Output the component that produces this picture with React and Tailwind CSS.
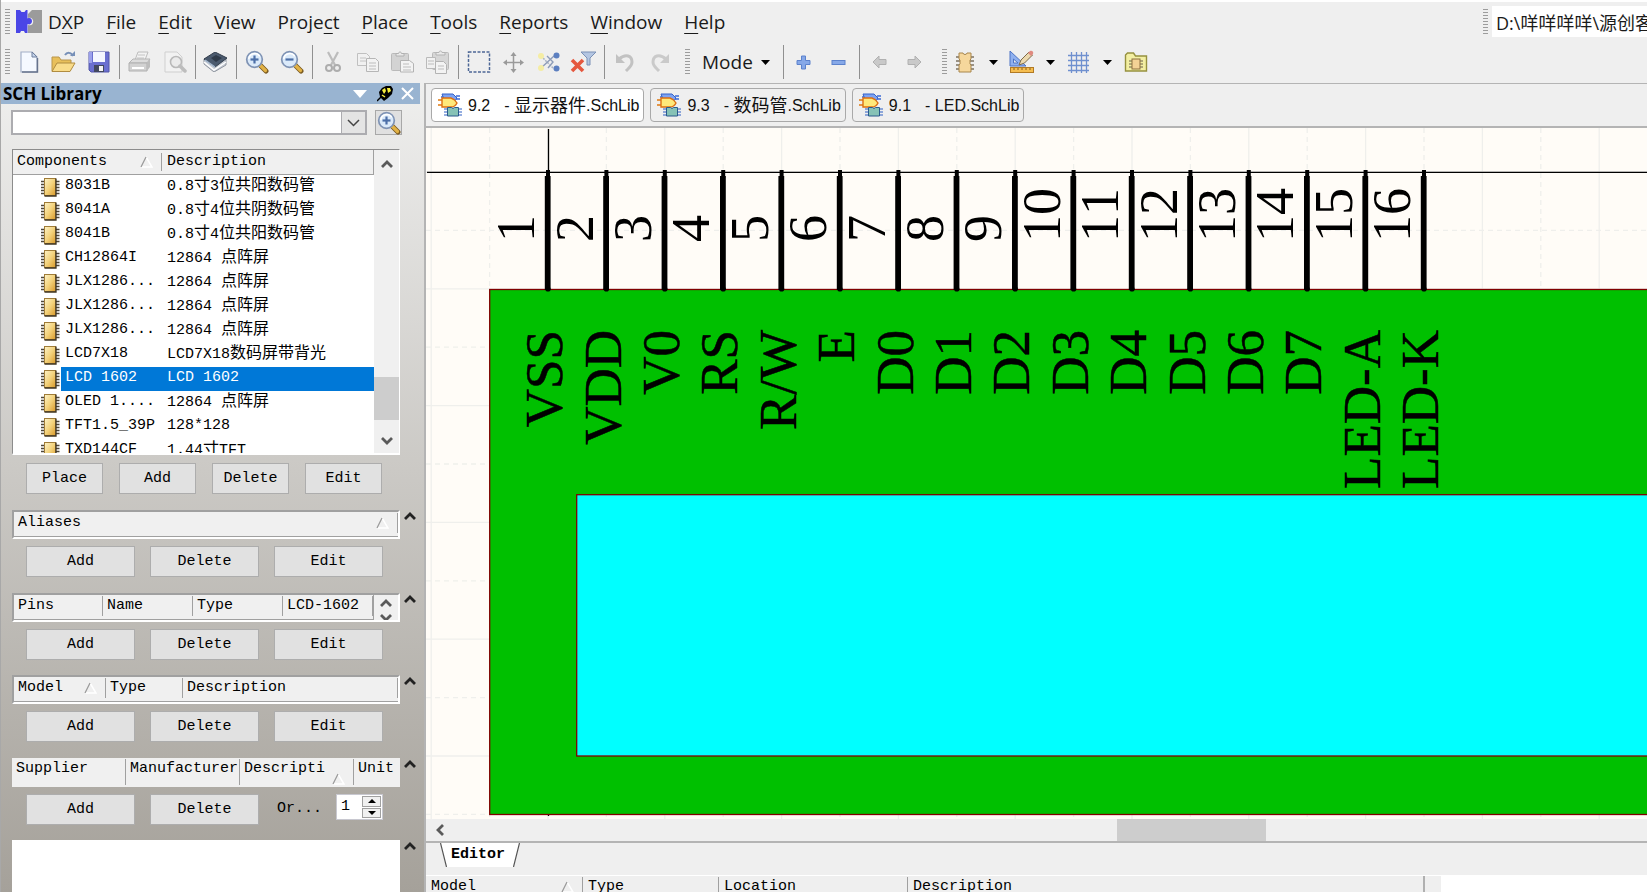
import React from "react";

const UI = "font-['Open_Sans','Noto_Sans_CJK_SC',sans-serif]";
const MONO = "font-['Liberation_Mono','Noto_Sans_CJK_SC',monospace]";

/* ---------- text helpers ---------- */

function Mixed({ text, cjk }) {
  const parts = text.split(/([\u4e00-\u9fff]+)/).filter(Boolean);
  return parts.map((p, i) =>
    /[\u4e00-\u9fff]/.test(p) ? (
      <span key={i} className={cjk}>{p}</span>
    ) : (
      <React.Fragment key={i}>{p}</React.Fragment>
    )
  );
}

/* ---------- small pieces ---------- */

function Grip() {
  return (
    <div className="h-[26px] w-[5px] shrink-0 bg-[repeating-linear-gradient(to_bottom,#9c9c9c_0px,#9c9c9c_1px,#efefef_1px,#efefef_3px)]" />
  );
}

function Sep() {
  return (
    <div className="flex h-[34px] w-[6px] shrink-0 justify-center">
      <div className="w-px bg-[#909090]" />
    </div>
  );
}

function Tool({ label, children }) {
  return (
    <button type="button" aria-label={label} className="flex h-[34px] w-[35px] shrink-0 items-center justify-center">
      {children}
    </button>
  );
}

function Caret({ label }) {
  return (
    <button type="button" aria-label={label} className="flex h-[34px] w-[22px] shrink-0 items-center justify-center">
      <svg width="9" height="5" viewBox="0 0 9 5"><path d="M0 0h9L4.500 5z" fill="#000" /></svg>
    </button>
  );
}

function SortMark() {
  return (
    <svg width="13" height="12" viewBox="0 0 13 12" className="shrink-0" aria-hidden="true">
      <path d="M6 1L12 11H1" fill="none" stroke="#fff" strokeWidth="1.500" />
      <path d="M1 11L6 1" fill="none" stroke="#9a9a9a" strokeWidth="1.300" />
    </svg>
  );
}

function Chevron({ dir = "up", color = "#5a5a5a", size = 12 }) {
  const d = {
    up: "M1 9L6 4L11 9",
    down: "M1 3L6 8L11 3",
    left: "M9 1L4 6L9 11",
  }[dir];
  return (
    <svg width={size} height={size} viewBox="0 0 12 12" aria-hidden="true">
      <path d={d} fill="none" stroke={color} strokeWidth="2.800" />
    </svg>
  );
}

function ChipIcon() {
  return (
    <svg width="19" height="20" viewBox="0 0 19 20" className="shrink-0" aria-hidden="true">
      <defs>
        <linearGradient id="chip" x1="0" y1="0" x2="1" y2="1">
          <stop offset="0" stopColor="#fdf3c8" />
          <stop offset="0.500" stopColor="#f3d27c" />
          <stop offset="1" stopColor="#d99a2b" />
        </linearGradient>
      </defs>
      <path d="M0 4.500h3M0 7.500h3M0 10.500h3M0 13.500h3M0 16.500h3M15 4.500h3.500M15 7.500h3.500M15 10.500h3.500M15 13.500h3.500M15 16.500h3.500" stroke="#4f483c" strokeWidth="1.400" />
      <rect x="3.500" y="1.500" width="11" height="17" fill="url(#chip)" stroke="#a07c38" />
      <path d="M3.500 19h11.500V1.500" fill="none" stroke="#3f3420" strokeWidth="1.300" />
    </svg>
  );
}

function Magnifier({ sign }) {
  return (
    <svg width="24" height="24" viewBox="0 0 24 24" aria-hidden="true">
      <path d="M15 15l6 6" stroke="#7a5a20" strokeWidth="5" strokeLinecap="round" />
      <path d="M15 15l5.500 5.500" stroke="#e2b245" strokeWidth="3.200" strokeLinecap="round" />
      <circle cx="9.500" cy="9.500" r="7.800" fill="#dbeafa" stroke="#7f93b4" strokeWidth="1.700" />
      <path d="M3.800 9a6 6 0 0 1 11-2.600" fill="none" stroke="#fff" strokeWidth="1.500" />
      <path d="M5.500 9.500h8" stroke="#4c6fa8" strokeWidth="2.200" />
      {sign === "+" && <path d="M9.500 5.500v8" stroke="#4c6fa8" strokeWidth="2.200" />}
    </svg>
  );
}

function Logo() {
  return (
    <svg width="26" height="23" viewBox="0 0 26 23" aria-hidden="true">
      <path d="M12 0h14v23H12z" fill="#9b9b9b" />
      <path d="M11 0h5l-4 4v4c7-2.500 7 9.500 0 7v8h-1z" fill="#efefef" />
      <path d="M0 0h4l1.500 2h3L10 0h1.500v8.500c6-2.500 6 8 0 5.500V23H9l-1-2H5l-1 2H0z" fill="#4a46e6" />
    </svg>
  );
}

const icons = {
  newDoc: (
    <svg width="20" height="22" viewBox="0 0 20 22">
      <path d="M2 1h11l5 5v15H2z" fill="#f5f9ff" stroke="#a3b0c8" strokeWidth="1.200" />
      <path d="M13 1v5h5z" fill="#c6d6ee" stroke="#6f7f9c" />
      <path d="M3 21h15.500V7" fill="none" stroke="#66738c" strokeWidth="1.400" />
    </svg>
  ),
  open: (
    <svg width="25" height="22" viewBox="0 0 25 22">
      <path d="M1 20V6h7l2 3h10v4" fill="#e8bf5a" stroke="#b8954a" />
      <path d="M1 20.500L6 12h18l-5 8.500z" fill="#f9dc8a" stroke="#b08c40" />
      <path d="M14 4c2-3 6-3 8 1" fill="none" stroke="#7790b8" strokeWidth="2" />
      <path d="M19 5h5V0z" fill="#7790b8" />
    </svg>
  ),
  save: (
    <svg width="22" height="22" viewBox="0 0 22 22">
      <path d="M1 1h20v20H3l-2-2z" fill="#6a6fd0" stroke="#5257a8" />
      <rect x="5" y="1" width="12" height="10" fill="#f4f6ff" />
      <path d="M1 1h3v11H1z" fill="#9ba0ec" />
      <rect x="6" y="14" width="10" height="7" fill="#42485f" />
      <rect x="11" y="15" width="4" height="5" fill="#f3f3f3" />
    </svg>
  ),
  print: (
    <svg width="23" height="22" viewBox="0 0 23 22">
      <path d="M7 9l3-8h10l-3 8z" fill="#f3f3f3" stroke="#bcbcbc" />
      <path d="M10 4h7M9 7h7" stroke="#c4c4c4" />
      <path d="M1 12l4-4h17l-3 4z" fill="#dcdcdc" stroke="#b5b5b5" />
      <path d="M1 12h18v8H1z" fill="#d2d2d2" stroke="#b0b0b0" />
      <path d="M19 12l3-4v8l-3 4z" fill="#bdbdbd" />
      <path d="M4 17h12" stroke="#fff" strokeWidth="2" />
    </svg>
  ),
  preview: (
    <svg width="24" height="22" viewBox="0 0 24 22">
      <path d="M2 1h12l5 5v15H2z" fill="#f2f2f2" stroke="#cfcfcf" />
      <circle cx="13" cy="11" r="5.500" fill="#ebebeb" stroke="#b9b9b9" strokeWidth="1.600" />
      <path d="M17 15l5 5" stroke="#bdbdbd" strokeWidth="3.500" strokeLinecap="round" />
    </svg>
  ),
  layers: (
    <svg width="25" height="20" viewBox="0 0 25 20">
      <path d="M1 7v5l10 8 12-7V7z" fill="#c9ced6" stroke="#8f959f" />
      <path d="M1 10l10 8 12-8" fill="none" stroke="#fff" strokeWidth="1.500" />
      <path d="M1 7l11-7 12 6-12 9z" fill="#4b5a6e" stroke="#333e4c" />
      <path d="M8 6l5-3 6 3-6 4z" fill="#2f3a49" />
      <path d="M2 8l10 7" stroke="#a4b8d0" strokeWidth="1.500" />
    </svg>
  ),
  cut: (
    <svg width="16" height="22" viewBox="0 0 16 22">
      <path d="M3 1l7 13M13 1L6 14" stroke="#bcbcbc" strokeWidth="2.200" />
      <circle cx="4" cy="17" r="3" fill="none" stroke="#adadad" strokeWidth="2" />
      <circle cx="12" cy="17" r="3" fill="none" stroke="#adadad" strokeWidth="2" />
    </svg>
  ),
  copy: (
    <svg width="24" height="21" viewBox="0 0 24 21">
      <path d="M1.500 1.500h9l3 3v9h-12z" fill="#f1f1f1" stroke="#c0c0c0" />
      <path d="M4 6h6M4 9h6" stroke="#c4c4c4" />
      <path d="M10.500 6.500h9l3 3v10h-12z" fill="#f3f3f3" stroke="#b6b6b6" />
      <path d="M13 11h7M13 14h7M13 17h7" stroke="#bdbdbd" />
    </svg>
  ),
  paste: (
    <svg width="25" height="22" viewBox="0 0 25 22">
      <rect x="1.500" y="2.500" width="17" height="17" rx="1" fill="#d3d3d3" stroke="#bababa" />
      <path d="M6 5V2.500h2.500c0-2 3-2 3 0H14V5z" fill="#e9e9e9" stroke="#b0b0b0" />
      <path d="M10.500 9.500h9l4 3v8.500h-13z" fill="#f3f3f3" stroke="#b3b3b3" />
      <path d="M13 13h6M13 16h8M13 19h8" stroke="#bdbdbd" />
    </svg>
  ),
  rubber: (
    <svg width="25" height="25" viewBox="0 0 25 25">
      <rect x="7.500" y="2.500" width="16" height="17" rx="1" fill="#d6d6d6" stroke="#bababa" />
      <path d="M11 5V2.500h3c0-2 3-2 3 0h3V5z" fill="#e9e9e9" stroke="#b3b3b3" />
      <path d="M1.500 7.500h9v11h-9z" fill="#f1f1f1" stroke="#bababa" />
      <path d="M3 11h6M3 14h6" stroke="#bdbdbd" />
      <path d="M10.500 11.500h8l3 3v9h-11z" fill="#f3f3f3" stroke="#b3b3b3" />
      <path d="M13 16h6M13 19h6" stroke="#bdbdbd" />
    </svg>
  ),
  select: (
    <svg width="24" height="24" viewBox="0 0 24 24">
      <rect x="1.500" y="2" width="21" height="20" fill="none" stroke="#4d6796" strokeWidth="1.500" strokeDasharray="3 1.500" />
    </svg>
  ),
  move: (
    <svg width="21" height="21" viewBox="0 0 21 21">
      <path d="M10.500 2v17M2 10.500h17" stroke="#9a9a9a" strokeWidth="1.500" />
      <path d="M10.500 0l3 4h-6zM10.500 21l3-4h-6zM0 10.500l4-3v6zM21 10.500l-4-3v6z" fill="#9a9a9a" />
    </svg>
  ),
  deselect: (
    <svg width="23" height="22" viewBox="0 0 23 22">
      <path d="M4 5l12 12" stroke="#a9b3c4" strokeWidth="1.500" strokeDasharray="2 1" />
      <path d="M17 5l-13 12M10 5l6 6-5 6" fill="none" stroke="#8d9cb8" strokeWidth="1.400" />
      <circle cx="4" cy="5" r="3" fill="#f5eda4" />
      <circle cx="4" cy="17" r="3" fill="#f5eda4" />
      <circle cx="19.500" cy="4.500" r="3" fill="#5c7fc0" />
      <circle cx="19.500" cy="17.500" r="3" fill="#5c7fc0" />
    </svg>
  ),
  clear: (
    <svg width="27" height="22" viewBox="0 0 27 22">
      <path d="M11 1h15l-6 6v7h-3V7z" fill="#b4c6e2" stroke="#7a90b5" />
      <path d="M2 9l11 11M13 9L2 20" stroke="#e5583f" strokeWidth="3.600" />
    </svg>
  ),
  undo: (
    <svg width="20" height="20" viewBox="0 0 20 20">
      <path d="M4 7c7-6 13-3 13 3 0 4-3 6-6 9" fill="none" stroke="#c2c2c2" strokeWidth="3" />
      <path d="M1 2v9h9z" fill="#c2c2c2" />
    </svg>
  ),
  redo: (
    <svg width="20" height="20" viewBox="0 0 20 20">
      <path d="M16 7C9 1 3 4 3 10c0 4 3 6 6 9" fill="none" stroke="#cacaca" strokeWidth="3" />
      <path d="M19 2v9h-9z" fill="#cacaca" />
    </svg>
  ),
  plus: (
    <svg width="15" height="15" viewBox="0 0 15 15">
      <path d="M5.500 1h4v4.500H14v4H9.500V14h-4V9.500H1v-4h4.500z" fill="#86a8e8" stroke="#5c82cc" />
    </svg>
  ),
  minus: (
    <svg width="15" height="15" viewBox="0 0 15 15">
      <rect x="1" y="5.500" width="13" height="4" fill="#86a8e8" stroke="#5c82cc" />
    </svg>
  ),
  back: (
    <svg width="15" height="14" viewBox="0 0 15 14">
      <path d="M1 7l6-6v3.500h7v5H7V13z" fill="#c9c9c9" stroke="#b0b0b0" />
    </svg>
  ),
  forward: (
    <svg width="15" height="14" viewBox="0 0 15 14">
      <path d="M14 7L8 1v3.500H1v5h7V13z" fill="#c9c9c9" stroke="#b0b0b0" />
    </svg>
  ),
  part: (
    <svg width="20" height="21" viewBox="0 0 20 21">
      <path d="M1 5h18M1 9h18M1 13h18M1 17h18" stroke="#7d7361" strokeWidth="1.500" />
      <path d="M4 1h4c0 2 4 2 4 0h4v6l-1 1v4l1 1v7H4v-7l1-1V8L4 7z" fill="#f6d79c" stroke="#a8864c" />
    </svg>
  ),
  draw: (
    <svg width="25" height="24" viewBox="0 0 25 24">
      <path d="M1 1v15h16z" fill="#8fb0ef" stroke="#4c73c4" />
      <path d="M4.500 9v4h4.500z" fill="#efefef" stroke="#4c73c4" />
      <path d="M10 15l2-5 8-8 3.500 3-8 8z" fill="#ecd9ae" stroke="#7d6a48" />
      <path d="M19 3l2-2c2-1 4 1 3 3l-2 2z" fill="#e08a80" />
      <rect x="1.500" y="17.500" width="23" height="5" fill="#f5bd4f" stroke="#b27a24" />
      <path d="M5 18v2M9 18v2M13 18v2M17 18v2M21 18v2" stroke="#8a5f1c" />
    </svg>
  ),
  grid: (
    <svg width="23" height="23" viewBox="0 0 23 23">
      <path d="M4.500 1v21M9.500 1v21M14.500 1v21M19.500 1v21M1 4.500h21M1 9.500h21M1 14.500h21M1 19.500h21" stroke="#6f90cf" strokeWidth="1.300" />
    </svg>
  ),
  library: (
    <svg width="24" height="21" viewBox="0 0 24 21">
      <path d="M1.500 19V3l2-2h6l2 3h11v15z" fill="#f3efa2" stroke="#96913f" strokeWidth="1.400" />
      <path d="M5 9h14M5 12h14M5 15h14" stroke="#6c634c" strokeWidth="1.200" />
      <rect x="8" y="7" width="8" height="10" fill="#f3d295" stroke="#8c713e" />
    </svg>
  ),
};

function SchIcon() {
  return (
    <svg width="25" height="24" viewBox="0 0 25 24" className="shrink-0" aria-hidden="true">
      <path d="M3 4h3M18 3h4M18 6h4" stroke="#3d6bd6" strokeWidth="1.300" />
      <path d="M4 1h11l4 4-3 4H7z" fill="#7da2f2" stroke="#3562c8" />
      <path d="M0 7h5M0 12h5M15 10h4" stroke="#e07a10" strokeWidth="1.600" />
      <path d="M4 5h9c3 1 5 3 6 5-1 2-3 4-6 4H4z" fill="#ffe97a" stroke="#dd6f10" strokeWidth="1.400" />
      <path d="M6 16h18M6 19h18M6 22h18" stroke="#2d5fc4" strokeWidth="1.200" />
      <path d="M9.500 14.500h4l1.500 1 1.500-1h4v8.500h-11z" fill="#86c2b6" stroke="#2b5a8c" />
    </svg>
  );
}

/* ---------- menu and toolbar ---------- */

const menus = [
  ["D", "X", "P"],
  ["", "F", "ile"],
  ["", "E", "dit"],
  ["", "V", "iew"],
  ["Proje", "c", "t"],
  ["", "P", "lace"],
  ["", "T", "ools"],
  ["", "R", "eports"],
  ["", "W", "indow"],
  ["", "H", "elp"],
];

function MenuBar() {
  return (
    <div className="flex h-[39px] items-center pl-1">
      <Grip />
      <div className="ml-1.5 mr-1.5"><Logo /></div>
      <nav className="flex gap-[22px]">
        {menus.map(([a, b, c]) => (
          <button key={a + b + c} type="button" className="text-[19px] leading-6 text-[#1a1a1a]">
            {a}<span className="underline decoration-1 underline-offset-4">{b}</span>{c}
          </button>
        ))}
      </nav>
      <div className="ml-auto flex w-[164px] items-center gap-1">
        <Grip />
        <input
          aria-label="Document path"
          defaultValue={"D:\\咩咩咩咩\\源创客"}
          className="h-[31px] min-w-0 flex-1 bg-white pl-1 text-[18px] text-[#1a1a1a] outline-none"
        />
      </div>
    </div>
  );
}

function ToolBar() {
  return (
    <div className="flex h-[42px] items-center pl-1">
      <Grip />
      <div className="w-px shrink-0" />
      <Tool label="New">{icons.newDoc}</Tool>
      <Tool label="Open">{icons.open}</Tool>
      <Tool label="Save">{icons.save}</Tool>
      <Sep />
      <Tool label="Print">{icons.print}</Tool>
      <Tool label="Print preview">{icons.preview}</Tool>
      <Sep />
      <Tool label="Devices">{icons.layers}</Tool>
      <Sep />
      <Tool label="Zoom in"><Magnifier sign="+" /></Tool>
      <Tool label="Zoom out"><Magnifier sign="-" /></Tool>
      <Sep />
      <Tool label="Cut">{icons.cut}</Tool>
      <Tool label="Copy">{icons.copy}</Tool>
      <Tool label="Paste">{icons.paste}</Tool>
      <Tool label="Rubber stamp">{icons.rubber}</Tool>
      <Sep />
      <Tool label="Select area">{icons.select}</Tool>
      <Tool label="Move">{icons.move}</Tool>
      <Tool label="Deselect">{icons.deselect}</Tool>
      <Tool label="Clear filter">{icons.clear}</Tool>
      <Sep />
      <Tool label="Undo">{icons.undo}</Tool>
      <Tool label="Redo">{icons.redo}</Tool>
      <div className="ml-2 flex items-center">
        <Grip />
        <button type="button" className="ml-3 flex w-[78px] items-center gap-2 text-[19px] leading-6 text-[#1a1a1a]">
          Mode
          <svg width="9" height="5" viewBox="0 0 9 5"><path d="M0 0h9L4.500 5z" fill="#000" /></svg>
        </button>
      </div>
      <Sep />
      <Tool label="Add mode">{icons.plus}</Tool>
      <Tool label="Remove mode">{icons.minus}</Tool>
      <Sep />
      <Tool label="Previous">{icons.back}</Tool>
      <Tool label="Next">{icons.forward}</Tool>
      <div className="ml-2.5 flex items-center">
        <Grip />
        <Tool label="Place part">{icons.part}</Tool>
        <Caret label="Part options" />
        <Tool label="Drawing tools">{icons.draw}</Tool>
        <Caret label="Drawing options" />
        <Tool label="Grid">{icons.grid}</Tool>
        <Caret label="Grid options" />
        <Tool label="Model manager">{icons.library}</Tool>
      </div>
    </div>
  );
}

/* ---------- library panel ---------- */

const components = [
  ["8031B", "0.8寸3位共阳数码管"],
  ["8041A", "0.8寸4位共阴数码管"],
  ["8041B", "0.8寸4位共阳数码管"],
  ["CH12864I", "12864 点阵屏"],
  ["JLX1286...", "12864 点阵屏"],
  ["JLX1286...", "12864 点阵屏"],
  ["JLX1286...", "12864 点阵屏"],
  ["LCD7X18", "LCD7X18数码屏带背光"],
  ["LCD 1602", "LCD 1602"],
  ["OLED 1....", "12864 点阵屏"],
  ["TFT1.5_39P", "128*128"],
  ["TXD144CF", "1.44寸TFT"],
];

function PanelButton({ children, className }) {
  return (
    <button type="button" className={`h-[31px] border border-[#adadad] bg-[#e1e1e1] text-[15px] leading-5 ${className}`}>
      {children}
    </button>
  );
}

function ButtonRow({ names }) {
  return (
    <div className="flex gap-[15px] pl-3.5 pt-[7px]">
      {names.map((n) => (
        <PanelButton key={n} className="w-[109px]">{n}</PanelButton>
      ))}
    </div>
  );
}

function Collapse({ label }) {
  return (
    <button type="button" aria-label={label} className="ml-1 h-3">
      <Chevron color="#222" />
    </button>
  );
}

function HeadTable({ cols, spin, plain, label }) {
  return (
    <div className="flex">
      <div className={`flex h-[29px] w-[388px] overflow-hidden ${plain ? "bg-[#f0f0f0]" : "border-2 border-b-white border-l-[#a0a0a0] border-r-white border-t-[#a0a0a0] bg-[#f0f0f0]"}`}>
        <div className={`min-w-0 flex-1 ${plain ? "" : "border-b border-[#a0a0a0]"}`}>
          <table className="w-full table-fixed border-collapse">
            <thead>
              <tr>
                {cols.map(([name, width, sort], i) => (
                  <th key={name} scope="col" className={`p-0 pt-px text-left align-top font-normal ${width}`}>
                    <div className={`flex justify-between pl-1 text-[15px] leading-5 ${plain ? "h-[26px] pr-0.5" : "h-5 items-center pr-2"} ${i < cols.length - 1 || !plain ? "border-r border-[#a0a0a0]" : ""}`}>
                      <span className="whitespace-nowrap">{name}</span>
                      {sort && (plain ? <span className="self-end pr-1.5"><SortMark /></span> : <SortMark />)}
                    </div>
                  </th>
                ))}
              </tr>
            </thead>
          </table>
        </div>
        {spin && (
          <div className="flex w-[25px] flex-col items-center justify-between border-l border-[#a0a0a0] pt-0.5">
            <button type="button" aria-label="Scroll up" className="h-3"><Chevron /></button>
            <button type="button" aria-label="Scroll down" className="h-2 overflow-hidden"><Chevron dir="down" /></button>
          </div>
        )}
      </div>
      <Collapse label={label} />
    </div>
  );
}

function LibraryPanel() {
  return (
    <aside className={`flex w-[426px] shrink-0 flex-col overflow-hidden border-r-2 border-[#b4b4b4] bg-gradient-to-b from-[#efefee] to-[#a5a19a] text-black ${MONO}`}>
      <header className={`mr-1 flex h-[21px] shrink-0 items-center bg-[#99b4d1] pl-[3px] pr-1.5 ${UI}`}>
        <h2 className="text-[17px] font-bold leading-5">SCH Library</h2>
        <button type="button" aria-label="Panel menu" className="ml-auto">
          <svg width="14" height="8" viewBox="0 0 14 8"><path d="M0 0h14L7 8z" fill="#fff" /></svg>
        </button>
        <button type="button" aria-label="Pin panel" className="ml-2.5">
          <svg width="16" height="16" viewBox="0 0 16 16">
            <path d="M0 15l5-5" stroke="#000" strokeWidth="1.500" />
            <path d="M2 6l3-4 4-2h5l2 3-1 5-4 4-4 3-4-4z" fill="#000" />
            <path d="M5 4l3-2 1 3-2 3zM10 2h3l1 3-3 2z" fill="#f7ee3c" />
            <path d="M5 9l3 2" stroke="#f7ee3c" strokeWidth="1.500" />
          </svg>
        </button>
        <button type="button" aria-label="Close panel" className="ml-2">
          <svg width="13" height="13" viewBox="0 0 13 13"><path d="M1 1l11 11M12 1L1 12" stroke="#fff" strokeWidth="2" /></svg>
        </button>
      </header>

      <div className="flex gap-2 pl-[11px] pt-1.5">
        <div className="flex h-[25px] w-[356px] border-2 border-[#acacb0] bg-white">
          <input aria-label="Filter components" className="min-w-0 flex-1 bg-white px-1 text-[15px] outline-none" />
          <button type="button" aria-label="Show filters" className="flex w-6 items-center justify-center border-l border-[#acacb0] bg-[#e4e4e4]">
            <svg width="13" height="8" viewBox="0 0 13 8"><path d="M1 1l5.500 5.500L12 1" fill="none" stroke="#444" strokeWidth="1.500" /></svg>
          </button>
        </div>
        <button type="button" aria-label="Search" className="flex h-[25px] w-[27px] items-center justify-center border border-[#a8a8a8] bg-[#e0e0e0]">
          <Magnifier sign="+" />
        </button>
      </div>

      <div className="pl-3 pt-3.5">
        <div className="flex h-[306px] w-[388px] overflow-hidden border border-b-2 border-b-white border-l-[#8c8c8c] border-r-white border-t-[#8c8c8c] bg-white">
          <div className="h-full flex-1 overflow-hidden">
            <table className="w-full table-fixed border-collapse">
              <thead>
                <tr className="h-6 border-b border-r border-[#a0a0a0] bg-[#f0f0f0]">
                  <th scope="col" className="w-[149px] p-0 pt-px text-left font-normal">
                    <div className="flex h-[18px] items-center justify-between border-r border-[#a0a0a0] pl-1 pr-2 text-[15px] leading-[18px]">
                      Components <SortMark />
                    </div>
                  </th>
                  <th scope="col" className="p-0 pl-[5px] pt-px text-left text-[15px] font-normal leading-[18px]">Description</th>
                </tr>
              </thead>
              <tbody>
                {components.map(([name, desc], i) => {
                  const on = i === 8;
                  return (
                    <tr key={i} className={on ? "text-white" : ""}>
                      <td className="p-0">
                        <div className="flex h-6 items-center pl-7">
                          <ChipIcon />
                          <span className={`ml-px h-6 flex-1 whitespace-nowrap pl-1 text-[15px] leading-[22px] ${on ? "bg-[#0078d7]" : ""}`}>{name}</span>
                        </div>
                      </td>
                      <td className={`p-0 ${on ? "bg-[#0078d7]" : ""}`}>
                        <div className="h-6 overflow-hidden whitespace-nowrap pl-[5px] text-[15px] leading-[22px]">
                          <Mixed text={desc} cjk="text-base leading-[22px]" />
                        </div>
                      </td>
                    </tr>
                  );
                })}
              </tbody>
            </table>
          </div>
          <div className="flex w-[25px] flex-col items-center bg-[#f0f0f0] pb-1.5 pt-2">
            <button type="button" aria-label="Scroll up" className="h-3"><Chevron /></button>
            <div className="mt-[207px] h-[43px] w-full bg-[#cdcdcd]" />
            <button type="button" aria-label="Scroll down" className="mt-auto h-3"><Chevron dir="down" /></button>
          </div>
        </div>

        <div className="flex gap-4 pl-3.5 pt-2">
          {["Place", "Add", "Delete", "Edit"].map((n) => (
            <PanelButton key={n} className="w-[77px]">{n}</PanelButton>
          ))}
        </div>

        <section className="pt-4">
          <HeadTable label="Collapse aliases" cols={[["Aliases", "w-full", true]]} />
          <ButtonRow names={["Add", "Delete", "Edit"]} />
        </section>
        <section className="pt-4">
          <HeadTable
            label="Collapse pins"
            spin
            cols={[["Pins", "w-[89px]"], ["Name", "w-[90px]"], ["Type", "w-[90px]"], ["LCD-1602", "w-[90px]"]]}
          />
          <ButtonRow names={["Add", "Delete", "Edit"]} />
        </section>
        <section className="pt-[15px]">
          <HeadTable
            label="Collapse models"
            cols={[["Model", "w-[92px]", true], ["Type", "w-[77px]"], ["Description", "w-[215px]"]]}
          />
          <ButtonRow names={["Add", "Delete", "Edit"]} />
        </section>
        <section className="pt-4">
          <HeadTable
            plain
            label="Collapse suppliers"
            cols={[["Supplier", "w-[114px]"], ["Manufacturer", "w-[114px]"], ["Descripti", "w-[114px]", true], ["Unit", "w-[46px]"]]}
          />
          <div className="flex gap-[15px] pl-3.5 pt-[7px]">
            <PanelButton className="w-[109px]">Add</PanelButton>
            <PanelButton className="w-[109px]">Delete</PanelButton>
            <div className="flex w-[109px] items-center justify-between text-[15px]">
              <label htmlFor="order" className="pl-[3px]">Or...</label>
              <div className="flex h-[26px] w-[47px] self-start border border-[#c8c8d0] bg-white">
                <input id="order" defaultValue="1" className="w-6 bg-white pl-1 text-[15px] outline-none" />
                <div className="flex flex-1 flex-col gap-px bg-white p-px">
                  <button type="button" aria-label="Increase" className="flex flex-1 items-center justify-center border border-[#a0a0a0] bg-[#f0f0f0]">
                    <svg width="8" height="4" viewBox="0 0 8 4"><path d="M0 4h8L4 0z" /></svg>
                  </button>
                  <button type="button" aria-label="Decrease" className="flex flex-1 items-center justify-center border border-[#a0a0a0] bg-[#f0f0f0]">
                    <svg width="8" height="4" viewBox="0 0 8 4"><path d="M0 0h8L4 4z" /></svg>
                  </button>
                </div>
              </div>
            </div>
          </div>
        </section>
        <section className="flex pt-[15px]">
          <div className="h-[60px] w-[388px] bg-white" />
          <Collapse label="Collapse preview" />
        </section>
      </div>
    </aside>
  );
}

/* ---------- document tabs ---------- */

const tabs = [
  ["9.2", "- ", "显示器件", ".SchLib"],
  ["9.3", "- ", "数码管", ".SchLib"],
  ["9.1", "- ", "", "LED.SchLib"],
];

function Tabs() {
  return (
    <div className="flex h-[45px] shrink-0 gap-1.5 border-b-2 border-t border-[#b4b4b4] bg-[#efefef] pl-[5px] pt-1 font-['Liberation_Sans','Noto_Sans_CJK_SC',sans-serif]">
      {tabs.map(([num, dash, cjk, rest], i) => (
        <button
          key={num}
          type="button"
          className={`flex h-[34px] items-center rounded border border-[#a9a9a9] pl-1.5 pr-1 text-base leading-5 text-[#111] ${i === 0 ? "bg-white" : "bg-[#efefef]"}`}
        >
          <SchIcon />
          <span className="ml-[5px] pt-0.5">{num}</span>
          <span className="ml-3.5 whitespace-pre pt-0.5">{dash}</span>
          {cjk && <span className="pt-0.5 text-[18px] leading-5">{cjk}</span>}
          <span className="pt-0.5">{rest}</span>
        </button>
      ))}
    </div>
  );
}

/* ---------- schematic ---------- */

const pins = ["VSS", "VDD", "V0", "RS", "R/W", "E", "D0", "D1", "D2", "D3", "D4", "D5", "D6", "D7", "LED-A", "LED-K"];
const PITCH = 58.4;
const ORIGIN_X = 122;
const ORIGIN_Y = 44;
const GRID = Array.from({ length: 48 }, (_, i) => i - 2);

function Schematic() {
  return (
    <svg className="block h-full w-full bg-[#fffcf7] font-['Liberation_Serif',serif] [font-kerning:none]" role="img" aria-label="LCD 1602 symbol">
      {GRID.map((k) => {
        const x = ORIGIN_X + k * PITCH;
        const y = ORIGIN_Y + k * PITCH;
        const dash = k % 2 ? "5 4" : undefined;
        return (
          <g key={k} stroke="#efefec" strokeWidth="1.300">
            <line x1={x} x2={x} y1="0" y2="100%" strokeDasharray={dash} />
            <line x1="0" x2="100%" y1={y} y2={y} strokeDasharray={dash} />
          </g>
        );
      })}
      <line x1={ORIGIN_X + 0.5} x2={ORIGIN_X + 0.5} y1="1" y2="688" stroke="#000" strokeWidth="1.300" />
      <line x1="1" x2="100%" y1="44.300" y2="44.300" stroke="#000" strokeWidth="1.300" />
      <rect x="63.700" y="161.500" width="100%" height="525" fill="#00c000" stroke="#800000" strokeWidth="1.300" />
      <rect x="150.700" y="366.700" width="100%" height="261.300" fill="#00ffff" stroke="#800000" strokeWidth="1.300" />
      {pins.map((name, i) => {
        const x = 121.7 + i * PITCH;
        return (
          <g key={name}>
            <line x1={x + 0.3} x2={x + 0.3} y1="42" y2="50" stroke="#000" strokeWidth="4" />
            <line x1={x} x2={x} y1="48" y2="162" stroke="#000" strokeWidth="5.800" />
            <circle cx={x + 0.3} cy="161" r="2.600" />
            <text transform={`translate(${x - 13.5} 114) rotate(-90)`} fontSize="54">{i + 1}</text>
            <text transform={`translate(${x + 14.5} 202) rotate(-90)`} fontSize="53" textAnchor="end" stroke="#000" strokeWidth="0.500">{name}</text>
          </g>
        );
      })}
    </svg>
  );
}

/* ---------- bottom editor strip ---------- */

function EditorStrip() {
  return (
    <div className={`shrink-0 bg-[#efefef] ${MONO}`}>
      <div className="flex h-6 items-center border-b-2 border-[#b4b4b4] pl-2">
        <button type="button" aria-label="Scroll left" className="h-3"><Chevron dir="left" /></button>
        <div className="ml-[671px] h-[22px] w-[149px] bg-[#cdcdcd]" />
      </div>
      <div className="flex h-8 pl-3.5">
        <button type="button" className="relative h-6 w-20 pr-1 text-[15px] font-bold leading-5">
          <svg width="80" height="24" viewBox="0 0 80 24" className="absolute left-0 top-0" aria-hidden="true">
            <path d="M0 0h80l-6 24H6z" fill="#fff" />
            <path d="M.5 0l6 24M79.500 0l-6 24" stroke="#555" strokeWidth="1.200" />
          </svg>
          <span className="relative">Editor</span>
        </button>
      </div>
      <div className="flex h-[17px] overflow-hidden border-t border-white">
        <table className="w-[999px] table-fixed border-r-2 border-[#b0b0b0]">
          <thead>
            <tr>
              {[
                ["Model", "w-[157px]", true],
                ["Type", "w-[136px]"],
                ["Location", "w-[189px]"],
                ["Description", ""],
              ].map(([name, width, sort], i) => (
                <th key={name} scope="col" className={`p-0 pt-px text-left font-normal ${width}`}>
                  <div className={`flex h-5 items-center justify-between pl-[5px] pr-2 text-[15px] leading-5 ${i < 3 ? "border-r border-[#a0a0a0]" : ""}`}>
                    {name} {sort && <SortMark />}
                  </div>
                </th>
              ))}
            </tr>
          </thead>
        </table>
        <div className="ml-4 flex-1 bg-white" />
      </div>
    </div>
  );
}

export default function App() {
  return (
    <div className={`flex h-screen flex-col overflow-hidden border-l border-[#a8a8a8] bg-[#efefef] ${UI}`}>
      <div className="h-0.5 shrink-0 bg-white" />
      <MenuBar />
      <ToolBar />
      <div className="-ml-px flex min-h-0 flex-1">
        <LibraryPanel />
        <main className="flex min-w-0 flex-1 flex-col">
          <Tabs />
          <div className="min-h-0 flex-1"><Schematic /></div>
          <EditorStrip />
        </main>
      </div>
    </div>
  );
}
